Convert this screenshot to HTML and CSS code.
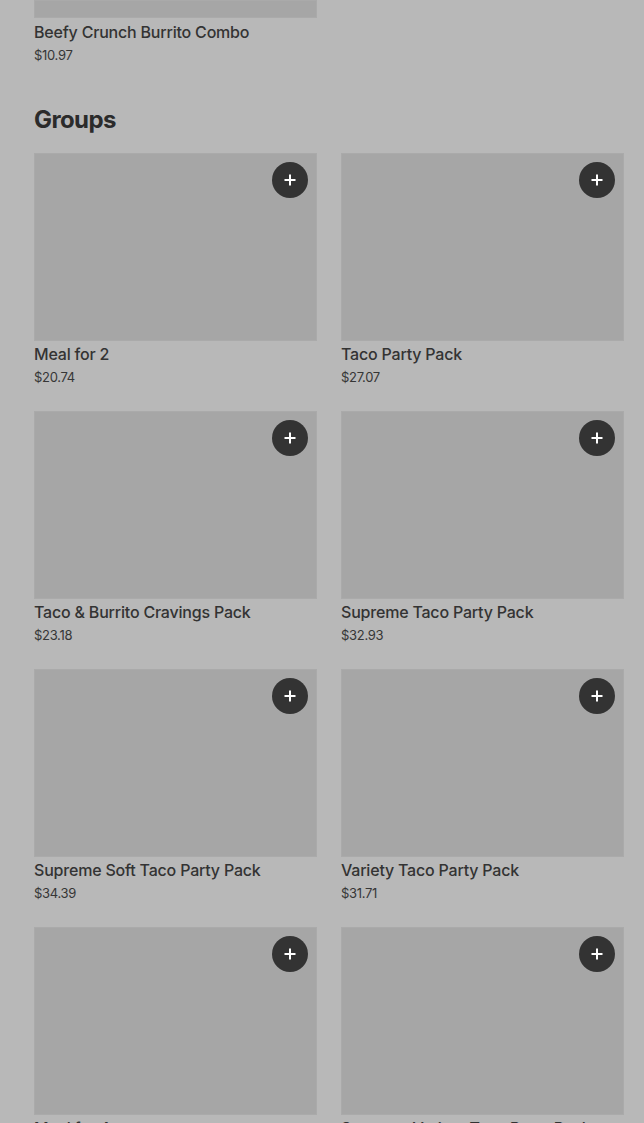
FILE: index.html
```html
<!DOCTYPE html>
<html lang="en">
<head>
<meta charset="utf-8">
<title>Groups</title>
<link rel="stylesheet" href="styles.css">
</head>
<body>
<main class="page">
  <div class="item top-item">
    <div class="thumb thumb-cut"></div>
    <div class="name">Beefy Crunch Burrito Combo</div>
    <div class="price">$10.97</div>
  </div>

  <h2 class="section-title">Groups</h2>

  <div class="grid">
    <div class="item">
      <div class="thumb"><button class="add" aria-label="Add"><svg viewBox="0 0 16 16" width="16" height="16"><path d="M8 3.5v9M3.5 8h9" stroke="#fff" stroke-width="2" stroke-linecap="square"/></svg></button></div>
      <div class="name">Meal for 2</div>
      <div class="price">$20.74</div>
    </div>
    <div class="item">
      <div class="thumb"><button class="add" aria-label="Add"><svg viewBox="0 0 16 16" width="16" height="16"><path d="M8 3.5v9M3.5 8h9" stroke="#fff" stroke-width="2" stroke-linecap="square"/></svg></button></div>
      <div class="name">Taco Party Pack</div>
      <div class="price">$27.07</div>
    </div>
    <div class="item">
      <div class="thumb"><button class="add" aria-label="Add"><svg viewBox="0 0 16 16" width="16" height="16"><path d="M8 3.5v9M3.5 8h9" stroke="#fff" stroke-width="2" stroke-linecap="square"/></svg></button></div>
      <div class="name">Taco &amp; Burrito Cravings Pack</div>
      <div class="price">$23.18</div>
    </div>
    <div class="item">
      <div class="thumb"><button class="add" aria-label="Add"><svg viewBox="0 0 16 16" width="16" height="16"><path d="M8 3.5v9M3.5 8h9" stroke="#fff" stroke-width="2" stroke-linecap="square"/></svg></button></div>
      <div class="name">Supreme Taco Party Pack</div>
      <div class="price">$32.93</div>
    </div>
    <div class="item">
      <div class="thumb"><button class="add" aria-label="Add"><svg viewBox="0 0 16 16" width="16" height="16"><path d="M8 3.5v9M3.5 8h9" stroke="#fff" stroke-width="2" stroke-linecap="square"/></svg></button></div>
      <div class="name">Supreme Soft Taco Party Pack</div>
      <div class="price">$34.39</div>
    </div>
    <div class="item">
      <div class="thumb"><button class="add" aria-label="Add"><svg viewBox="0 0 16 16" width="16" height="16"><path d="M8 3.5v9M3.5 8h9" stroke="#fff" stroke-width="2" stroke-linecap="square"/></svg></button></div>
      <div class="name">Variety Taco Party Pack</div>
      <div class="price">$31.71</div>
    </div>
    <div class="item">
      <div class="thumb"><button class="add" aria-label="Add"><svg viewBox="0 0 16 16" width="16" height="16"><path d="M8 3.5v9M3.5 8h9" stroke="#fff" stroke-width="2" stroke-linecap="square"/></svg></button></div>
      <div class="name">Meal for 4</div>
      <div class="price">$41.48</div>
    </div>
    <div class="item">
      <div class="thumb"><button class="add" aria-label="Add"><svg viewBox="0 0 16 16" width="16" height="16"><path d="M8 3.5v9M3.5 8h9" stroke="#fff" stroke-width="2" stroke-linecap="square"/></svg></button></div>
      <div class="name">Supreme Variety Taco Party Pack</div>
      <div class="price">$36.29</div>
    </div>
  </div>
</main>
</body>
</html>
```

FILE: styles.css
```css
html, body {
  margin: 0;
  padding: 0;
  background: #b8b8b8;
  overflow: hidden;
}

body {
  font-family: "Inter", "Noto Sans", "Liberation Sans", sans-serif;
  color: #2e2e2e;
}

.page {
  padding: 0 20px 0 34px;
  height: 1123px;
  overflow: hidden;
}

.top-item {
  width: 283px;
}

.thumb {
  position: relative;
  height: 188px;
  background: #a6a6a6;
  box-shadow: inset 0 0 0 1px #aaaaaa;
}

.thumb-cut {
  height: 18px;
}

.name {
  margin-top: 3px;
  font-size: 16px;
  line-height: 20px;
  font-weight: 500;
  letter-spacing: -0.2px;
  color: #333333;
  white-space: nowrap;
}

.top-item .name {
  margin-top: 4px;
}

.price {
  margin-top: 5px;
  font-size: 13px;
  line-height: 16px;
  color: #363636;
  letter-spacing: -0.3px;
}

.section-title {
  margin: 41px 0 17px;
  font-size: 24px;
  line-height: 32px;
  font-weight: 700;
  letter-spacing: -0.6px;
  color: #2b2b2b;
}

.grid {
  display: grid;
  grid-template-columns: 283px 283px;
  column-gap: 24px;
  row-gap: 26px;
}

.add {
  position: absolute;
  top: 9px;
  right: 9px;
  width: 36px;
  height: 36px;
  border: 0;
  padding: 0;
  border-radius: 50%;
  background: #333333;
  display: flex;
  align-items: center;
  justify-content: center;
}

.add svg {
  display: block;
}
```
